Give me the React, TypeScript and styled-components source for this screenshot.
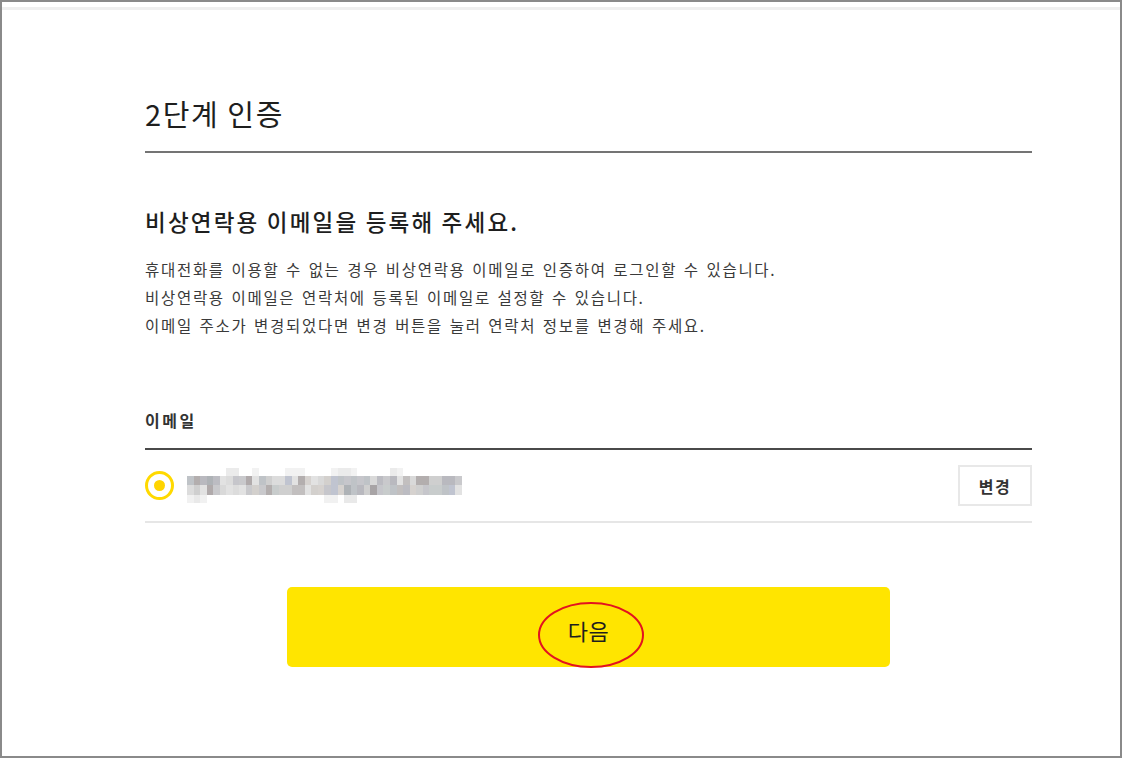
import React from 'react'
import styled, { createGlobalStyle } from 'styled-components'

const GlobalStyle = createGlobalStyle`
  html, body {
    margin: 0;
    padding: 0;
    background: #ffffff;
  }
  body {
    font-family: 'Noto Sans CJK KR', 'Noto Sans', sans-serif;
    color: #222;
  }
`

// 바깥 테두리 (스크린샷 프레임)
const Frame = styled.div`
  width: 1122px;
  height: 758px;
  box-sizing: border-box;
  border: 2px solid #8a8a8a;
  background: #fff;
  display: flex;
  flex-direction: column;
`

const TopStrip = styled.div`
  margin-top: 5px;
  height: 3px;
  background: #efefef;
`

const Content = styled.div`
  display: flex;
  flex-direction: column;
  padding: 0 88px 0 143px;
`

const Title = styled.h1`
  margin: 83px 0 0;
  padding-bottom: 18px;
  border-bottom: 2px solid #747474;
  font-size: 29px;
  line-height: 40px;
  font-weight: 400;
  letter-spacing: 1.6px;
  color: #1e1e1e;
`

const Heading = styled.h2`
  margin: 53px 0 0;
  font-size: 22.5px;
  line-height: 30px;
  font-weight: 500;
  letter-spacing: 2.2px;
  color: #1e1e1e;
`

const Desc = styled.p`
  margin: 19px 0 0;
  font-size: 15.5px;
  line-height: 28px;
  letter-spacing: 1.7px;
  word-spacing: 1.5px;
  color: #3a3a3a;
`

const FieldLabel = styled.div`
  margin-top: 69px;
  padding-bottom: 16px;
  border-bottom: 2px solid #4a4a4a;
  font-size: 16px;
  line-height: 24px;
  font-weight: 700;
  letter-spacing: 2.5px;
  color: #333;
`

const EmailRow = styled.div`
  height: 71px;
  display: flex;
  align-items: center;
  border-bottom: 2px solid #e6e6e6;
`

const Radio = styled.span`
  width: 29px;
  height: 29px;
  box-sizing: border-box;
  border: 3px solid #ffd900;
  border-radius: 50%;
  display: flex;
  align-items: center;
  justify-content: center;
  flex: none;

  &::after {
    content: '';
    width: 11px;
    height: 11px;
    border-radius: 50%;
    background: #ffd400;
  }
`

const Mosaic = styled.div`
  margin-left: 13px;
  display: grid;
  grid-template-columns: repeat(42, 6.55px);
  grid-template-rows: 8px 9px 10px 8px;
`

const Cell = styled.span``

const ChangeButton = styled.button`
  margin-left: auto;
  width: 74px;
  height: 41px;
  box-sizing: border-box;
  border: 2px solid #e8e8e8;
  background: #fff;
  font-family: inherit;
  font-size: 16px;
  font-weight: 700;
  letter-spacing: 1.5px;
  color: #333;
  cursor: pointer;
`

const ButtonArea = styled.div`
  margin-top: 64px;
  display: flex;
  justify-content: center;
`

const NextButton = styled.button`
  position: relative;
  width: 603px;
  height: 80px;
  border: none;
  border-radius: 5px;
  background: #ffe500;
  font-family: inherit;
  font-size: 22px;
  letter-spacing: 0.5px;
  color: #1e1e1e;
  padding-top: 6px;
  cursor: pointer;
`

// 빨간 동그라미 표시 (주석)
const Mark = styled.svg`
  position: absolute;
  left: 250px;
  top: 14px;
  width: 108px;
  height: 68px;
  pointer-events: none;
`

// 흐리게 처리된 이메일 주소
const grays = [
  '#b3aeae', '#c9c9cc', '#d3d0cd', '#bcbcc2', '#c8cccc', '#d9d9d9', '#b9b9bf',
  '#c2bfbf', '#a8a4a6', '#cfcfcf', '#bfc3c7', '#dcdcdc', '#b0aaab', '#c6c6cb',
  '#d6d2cf', '#aeb2b6', '#e2e2e2', '#c0c4d0'
]

const seed = (i: number) => {
  const x = Math.sin(i * 12.9898 + 78.233) * 43758.5453
  return x - Math.floor(x)
}

const faintTop = [6, 7, 10, 15, 16, 17, 22, 23, 24, 25, 31, 32]
const faintBottom = [0, 1, 2, 21, 22, 24, 25]

const cellColor = (row: number, col: number) => {
  if (row === 0) return faintTop.includes(col) ? (seed(col) > 0.5 ? '#ebebeb' : '#f2f2f2') : '#fff'
  if (row === 3) return faintBottom.includes(col) ? (seed(col + 99) > 0.5 ? '#e9e9e9' : '#f1f1f1') : '#fff'
  return grays[Math.floor(seed(row * 100 + col) * grays.length)]
}

const BlurredEmail = () => {
  const cells = []
  for (let r = 0; r < 4; r++) {
    for (let c = 0; c < 42; c++) {
      cells.push(<Cell key={`${r}-${c}`} style={{ background: cellColor(r, c) }} />)
    }
  }
  return <Mosaic>{cells}</Mosaic>
}

const App: React.FC = () => {
  return (
    <>
      <GlobalStyle />
      <Frame>
        <TopStrip />
        <Content>
          <Title>2단계 인증</Title>
          <Heading>비상연락용 이메일을 등록해 주세요.</Heading>
          <Desc>
            휴대전화를 이용할 수 없는 경우 비상연락용 이메일로 인증하여 로그인할 수 있습니다.
            <br />
            비상연락용 이메일은 연락처에 등록된 이메일로 설정할 수 있습니다.
            <br />
            이메일 주소가 변경되었다면 변경 버튼을 눌러 연락처 정보를 변경해 주세요.
          </Desc>
          <FieldLabel>이메일</FieldLabel>
          <EmailRow>
            <Radio />
            <BlurredEmail />
            <ChangeButton>변경</ChangeButton>
          </EmailRow>
          <ButtonArea>
            <NextButton>
              다음
              <Mark viewBox="0 0 108 68">
                <ellipse cx="54" cy="34" rx="52" ry="32" fill="none" stroke="#e3121f" strokeWidth="2" />
              </Mark>
            </NextButton>
          </ButtonArea>
        </Content>
      </Frame>
    </>
  )
}

export default App
